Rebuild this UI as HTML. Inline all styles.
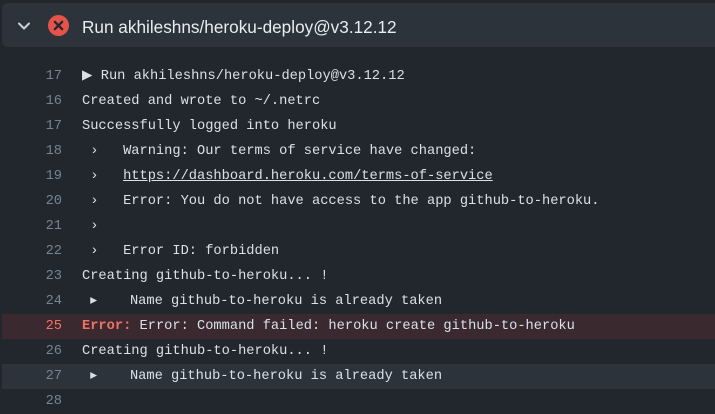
<!DOCTYPE html>
<html><head><meta charset="utf-8"><style>
body{margin:0;width:715px;height:413px;background:#22272e;overflow:hidden;font-family:"Liberation Sans",sans-serif;}
.hdr{position:absolute;left:2px;top:3px;width:730px;height:44px;background:#2d333b;border-radius:6px;}
.hdr .t{position:absolute;left:80px;top:14px;font-size:17.2px;color:#e6edf3;}
.log{position:absolute;left:0;top:64px;width:715px;font-family:"Liberation Mono",monospace;font-size:13.7px;color:#d8e0e8;}
.l{position:relative;height:25px;line-height:25px;white-space:pre;}
.n{position:absolute;left:0;width:62px;text-align:right;color:#768390;}
.c{position:absolute;left:82px;}
.err{background:#3a2a30;margin-left:2px;}
.err .n{color:#f47067;left:-2px}
.err .c{left:80px}
.hl{background:#2d333b;margin-left:2px;}
.hl .n{left:-2px}.hl .c{left:80px}
.e{color:#f47067;font-weight:bold}
u{text-decoration:underline}
</style></head><body>
<div class="hdr">
<svg style="position:absolute;left:14px;top:16px" width="16" height="14" viewBox="0 0 16 14"><path d="M3 4.5 L8 9.5 L13 4.5" fill="none" stroke="#c9d1d9" stroke-width="2" stroke-linecap="round" stroke-linejoin="round"/></svg>
<svg style="position:absolute;left:46px;top:12px" width="21" height="21" viewBox="0 0 20 20"><circle cx="10" cy="10" r="10" fill="#e5534b"/><path d="M6.5 6.5L13.5 13.5M13.5 6.5L6.5 13.5" stroke="#22272e" stroke-width="2.2" stroke-linecap="round"/></svg>
<div class="t">Run akhileshns/heroku-deploy@v3.12.12</div>
</div>
<div class="log">
<div class="l"><span class="n">17</span><span class="c">▶ Run akhileshns/heroku-deploy@v3.12.12</span></div>
<div class="l"><span class="n">16</span><span class="c">Created and wrote to ~/.netrc</span></div>
<div class="l"><span class="n">17</span><span class="c">Successfully logged into heroku</span></div>
<div class="l"><span class="n">18</span><span class="c"> ›   Warning: Our terms of service have changed:</span></div>
<div class="l"><span class="n">19</span><span class="c"> ›   <u>https://dashboard.heroku.com/terms-of-service</u></span></div>
<div class="l"><span class="n">20</span><span class="c"> ›   Error: You do not have access to the app github-to-heroku.</span></div>
<div class="l"><span class="n">21</span><span class="c"> ›</span></div>
<div class="l"><span class="n">22</span><span class="c"> ›   Error ID: forbidden</span></div>
<div class="l"><span class="n">23</span><span class="c">Creating github-to-heroku... !</span></div>
<div class="l"><span class="n">24</span><span class="c"> ▸    Name github-to-heroku is already taken</span></div>
<div class="l err"><span class="n">25</span><span class="c"><span class="e">Error:</span> Error: Command failed: heroku create github-to-heroku</span></div>
<div class="l"><span class="n">26</span><span class="c">Creating github-to-heroku... !</span></div>
<div class="l hl"><span class="n">27</span><span class="c"> ▸    Name github-to-heroku is already taken</span></div>
<div class="l"><span class="n">28</span><span class="c"></span></div>
</div>
</body></html>
